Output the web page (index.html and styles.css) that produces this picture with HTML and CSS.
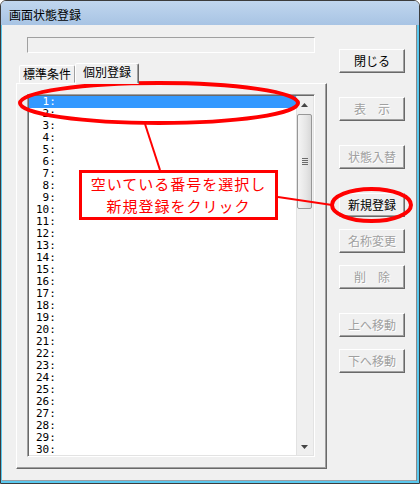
FILE: index.html
```html
<!DOCTYPE html>
<html lang="ja">
<head>
  <meta charset="UTF-8">
  <title>画面状態登録</title>
  <link rel="stylesheet" href="styles.css">
</head>
<body>

  <div class="window">
    <div class="titlebar">画面状態登録</div>

    <div class="client">
      <div class="left-col">
        <div class="readonly-field"></div>

        <div class="tabs">
          <div class="tab">標準条件</div>
          <div class="tab active">個別登録</div>
        </div>

        <div class="tab-panel">
          <div class="listbox">
            <div class="rows" id="rows"></div>
            <div class="scrollbar">
              <div class="arrow">
                <svg width="7" height="4" viewBox="0 0 7 4"><path d="M0 4 L3.5 0 L7 4 Z" fill="#444"/></svg>
              </div>
              <div class="thumb">
                <svg width="6" height="8" viewBox="0 0 6 8">
                  <path d="M0 0.5 H6 M0 2.5 H6 M0 4.5 H6 M0 6.5 H6" stroke="#6a6a6a" stroke-width="1"/>
                </svg>
              </div>
              <div class="track"></div>
              <div class="arrow">
                <svg width="7" height="4" viewBox="0 0 7 4"><path d="M0 0 L7 0 L3.5 4 Z" fill="#444"/></svg>
              </div>
            </div>
          </div>
        </div>
      </div>

      <div class="buttons">
        <button class="btn">閉じる</button>
        <button class="btn disabled gap-lg">表　示</button>
        <button class="btn disabled gap-lg">状態入替</button>
        <button class="btn gap-lg">新規登録</button>
        <button class="btn disabled gap-sm">名称変更</button>
        <button class="btn disabled gap-sm">削　除</button>
        <button class="btn disabled gap-lg">上へ移動</button>
        <button class="btn disabled gap-sm">下へ移動</button>
      </div>
    </div>

    <!-- red annotation on top of the dialog -->
    <svg class="marks" width="420" height="484" viewBox="0 0 420 484">
      <ellipse cx="159" cy="103" rx="139" ry="20" fill="none" stroke="#ff0000" stroke-width="4"/>
      <line x1="145" y1="124" x2="160" y2="170" stroke="#ff0000" stroke-width="2"/>
      <line x1="278" y1="197" x2="332" y2="205" stroke="#ff0000" stroke-width="2"/>
      <ellipse cx="371.5" cy="205" rx="39.5" ry="16" fill="none" stroke="#ff0000" stroke-width="4"/>
    </svg>
    <div class="callout">空いている番号を選択し<br>新規登録をクリック</div>
  </div>

  <script>
    var rows = document.getElementById("rows");
    for (var i = 1; i <= 30; i++) {
      var row = document.createElement("div");
      row.className = "row" + (i === 1 ? " selected" : "");
      row.textContent = (i < 10 ? " " : "") + i + ":";
      rows.appendChild(row);
    }
  </script>

</body>
</html>
```

FILE: styles.css
```css
body {
  margin: 0;
  font-family: "Noto Sans CJK JP", sans-serif;
  font-size: 12px;
}
.window {
  position: relative;
  width: 420px;
  height: 484px;
  box-sizing: border-box;
  border: 1px solid #3c3c3c;
  border-radius: 6px 6px 0 0;
  display: flex;
  flex-direction: column;
  overflow: hidden;
}
.titlebar {
  height: 24px;
  box-sizing: border-box;
  padding: 4px 0 0 8px;
  line-height: 20px;
  background: linear-gradient(#c0d6ee, #a8c4e4);
  color: #000;
}
.client {
  flex: 1;
  display: flex;
  gap: 12px;
  padding-left: 14px;
  background: #f0f0f0;
  border-style: solid;
  border-color: #5ac8ee;
  border-width: 0 2px 2px 1px;
  box-shadow: inset -1px 0 #8a8a8a, inset 0 -1px #9aa0a6;
}
.left-col {
  width: 311px;
}
.readonly-field {
  margin: 12px 0 0 11px;
  width: 288px;
  height: 16px;
  box-sizing: border-box;
  border: 1px solid;
  border-color: #a0a0a0 #fff #fff #a0a0a0;
  background: #f0f0f0;
}
.tabs {
  display: flex;
  align-items: flex-end;
  margin-top: 10px;
  padding-left: 3px;
  height: 20px;
}
.tab {
  height: 18px;
  box-sizing: border-box;
  padding: 0 3px;
  line-height: 16px;
  border: 1px solid;
  border-color: #fff #a0a0a0 transparent #fff;
  border-radius: 2px 2px 0 0;
  background: #f0f0f0;
  color: #000;
}
.tab.active {
  position: relative;
  z-index: 1;
  height: 21px;
  margin-bottom: -1px;
  padding: 0 7px;
  border-color: #fff #696969 transparent #fff;
  box-shadow: inset -1px 0 #a0a0a0;
}
.tab-panel {
  height: 386px;
  box-sizing: border-box;
  padding: 10px 0 0 10px;
  border: 1px solid;
  border-color: #fff #696969 #696969 #fff;
  box-shadow: inset -1px -1px #a0a0a0;
}
.listbox {
  width: 288px;
  height: 363px;
  box-sizing: border-box;
  border: 1px solid;
  border-color: #a0a0a0 #fff #fff #a0a0a0;
  padding: 1px;
  box-shadow: inset 1px 1px #696969, inset -1px -1px #e3e3e3;
  display: flex;
}
.rows {
  flex: 1;
  background: #fff;
  overflow: hidden;
}
.row {
  height: 12px;
  line-height: 12px;
  padding-left: 7px;
  white-space: pre;
  font-family: "DejaVu Sans Mono", monospace;
  font-size: 11px;
  color: #000;
}
.row.selected {
  background: #3399ff;
  color: #fff;
}
.scrollbar {
  width: 17px;
  display: flex;
  flex-direction: column;
  background: #efefef;
  box-shadow: inset 1px 0 #e2e2e2;
}
.arrow {
  height: 17px;
  display: flex;
  align-items: center;
  justify-content: center;
}
.thumb {
  height: 95px;
  margin: 1px 1px 0 1px;
  box-sizing: border-box;
  border: 1px solid #979797;
  border-radius: 2px;
  background: linear-gradient(90deg, #f4f4f4, #e6e6e6 60%, #d8d8d8);
  display: flex;
  align-items: center;
  justify-content: center;
}
.track {
  flex: 1;
}
.buttons {
  display: flex;
  flex-direction: column;
  padding-top: 24px;
}
.btn {
  width: 66px;
  height: 24px;
  padding: 0;
  box-sizing: border-box;
  border: 1px solid;
  border-color: #fff #696969 #696969 #fff;
  box-shadow: inset -1px -1px #a0a0a0;
  background: #f0f0f0;
  font-family: "Noto Sans CJK JP", sans-serif;
  font-size: 12px;
  line-height: 20px;
  color: #000;
}
.btn.disabled {
  color: #a0a0a0;
  text-shadow: 1px 1px #fff;
}
.gap-lg {
  margin-top: 24px;
}
.gap-sm {
  margin-top: 12px;
}
.marks {
  position: absolute;
  left: -1px;
  top: -1px;
  pointer-events: none;
}
.callout {
  position: absolute;
  left: 78px;
  top: 169px;
  width: 199px;
  height: 50px;
  box-sizing: border-box;
  border: 3px solid #ff0000;
  background: #fff;
  color: #ff0000;
  font-size: 15px;
  letter-spacing: 1px;
  line-height: 22px;
  text-align: center;
}
```
